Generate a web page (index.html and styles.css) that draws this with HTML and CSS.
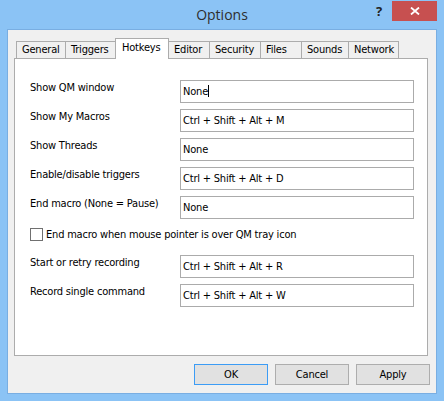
FILE: index.html
```html
<!DOCTYPE html>
<html>
<head>
<meta charset="utf-8">
<link rel="stylesheet" href="styles.css">
</head>
<body>
<div class="window">
  <div class="titlebar">
    <div class="tb-side"></div>
    <div class="title">Options</div>
    <div class="tb-side tb-controls">
      <div class="help">?</div>
      <div class="close">
        <svg width="10" height="8" viewBox="0 0 10 8"><path d="M1 0.5 L9 7.5 M9 0.5 L1 7.5" stroke="#fff" stroke-width="1.8" fill="none"/></svg>
      </div>
    </div>
  </div>
  <div class="client">
    <div class="tabs">
      <div class="tab t-general">General</div>
      <div class="tab t-triggers">Triggers</div>
      <div class="tab t-hotkeys active">Hotkeys</div>
      <div class="tab t-editor">Editor</div>
      <div class="tab t-security">Security</div>
      <div class="tab t-files">Files</div>
      <div class="tab t-sounds">Sounds</div>
      <div class="tab t-network">Network</div>
    </div>
    <div class="panel">
      <div class="row"><span class="label">Show QM window</span><div class="field">None<span class="caret"></span></div></div>
      <div class="row"><span class="label">Show My Macros</span><div class="field">Ctrl + Shift + Alt + M</div></div>
      <div class="row"><span class="label">Show Threads</span><div class="field">None</div></div>
      <div class="row"><span class="label">Enable/disable triggers</span><div class="field">Ctrl + Shift + Alt + D</div></div>
      <div class="row"><span class="label">End macro (None = Pause)</span><div class="field">None</div></div>
      <div class="check-row"><span class="checkbox"></span><span class="check-label">End macro when mouse pointer is over QM tray icon</span></div>
      <div class="row"><span class="label">Start or retry recording</span><div class="field">Ctrl + Shift + Alt + R</div></div>
      <div class="row"><span class="label">Record single command</span><div class="field">Ctrl + Shift + Alt + W</div></div>
    </div>
    <div class="buttons">
      <div class="btn default">OK</div>
      <div class="btn">Cancel</div>
      <div class="btn">Apply</div>
    </div>
  </div>
</div>
</body>
</html>
```
FILE: styles.css
```css
html, body {
  margin: 0;
  padding: 0;
}
body {
  font-family: "DejaVu Sans Condensed", "DejaVu Sans", sans-serif;
  font-size: 11px;
  letter-spacing: -0.2px;
  color: #000;
}
.window {
  width: 444px;
  height: 401px;
  box-sizing: border-box;
  background: #8bc3f5;
  padding: 0 7px 7px;
  display: flex;
  flex-direction: column;
}
.titlebar {
  height: 29px;
  display: grid;
  grid-template-columns: 1fr auto 1fr;
  margin: 0 -7px;
}
.title {
  font-family: "Open Sans", "Noto Sans", sans-serif;
  font-size: 14px;
  letter-spacing: 0;
  line-height: 29px;
  color: #2e2e2e;
}
.tb-controls {
  display: flex;
  justify-content: flex-end;
  align-items: flex-start;
  padding-right: 7px;
}
.help {
  width: 26px;
  height: 21px;
  margin-top: 1px;
  font-family: "Open Sans", "Noto Sans", sans-serif;
  font-weight: bold;
  font-size: 13px;
  letter-spacing: 0;
  line-height: 21px;
  text-align: center;
  color: #222;
}
.close {
  width: 45px;
  height: 20px;
  margin-top: 1px;
  background: #c75050;
  display: flex;
  align-items: center;
  justify-content: center;
}
.client {
  flex: 1;
  background: #f0f0f0;
  border: 1px solid #79aee2;
  display: flex;
  flex-direction: column;
}
.tabs {
  position: relative;
  z-index: 2;
  display: flex;
  align-items: flex-end;
  height: 20px;
  margin: 8px 0 0 8px;
}
.tab {
  box-sizing: border-box;
  height: 17px;
  border: 1px solid #acacac;
  border-bottom: none;
  background: #f0f0f0;
  padding: 1px 0 0 5px;
  line-height: 14px;
  margin-left: -1px;
  white-space: nowrap;
}
.tab.active {
  height: 21px;
  background: #fff;
  margin-bottom: -1px;
  padding: 2px 0 0 6px;
  position: relative;
  z-index: 3;
}
.t-general { width: 50px; margin-left: 0; }
.t-triggers { width: 51px; }
.t-hotkeys { width: 54px; }
.t-editor { width: 42px; }
.t-security { width: 52px; }
.t-files { width: 42px; }
.t-sounds { width: 48px; }
.t-network { width: 51px; }
.panel {
  box-sizing: border-box;
  width: 414px;
  height: 298px;
  margin-left: 6px;
  border: 1px solid #acacac;
  background: #fff;
  padding: 21px 0 0 15px;
}
.row {
  display: flex;
  align-items: flex-start;
  margin-bottom: 6px;
}
.label {
  width: 150px;
  line-height: 13px;
  padding-top: 1px;
}
.field {
  box-sizing: border-box;
  width: 234px;
  height: 23px;
  border: 1px solid #ababab;
  background: #fff;
  padding-left: 2px;
  line-height: 21px;
  white-space: nowrap;
}
.caret {
  display: inline-block;
  width: 1px;
  height: 12px;
  background: #000;
  vertical-align: -2px;
}
.check-row {
  display: flex;
  align-items: center;
  height: 13px;
  margin: 9px 0 14px;
}
.checkbox {
  box-sizing: border-box;
  width: 13px;
  height: 13px;
  border: 1px solid #707070;
  background: #fff;
  margin-right: 3px;
}
.check-label {
  line-height: 13px;
}
.buttons {
  display: flex;
  justify-content: flex-end;
  gap: 7px;
  margin: 8px 6px 0 0;
}
.btn {
  box-sizing: border-box;
  width: 74px;
  height: 21px;
  border: 1px solid #adadad;
  background: #e1e1e1;
  text-align: center;
  line-height: 19px;
}
.btn.default {
  border-color: #3c9cf5;
}
```
